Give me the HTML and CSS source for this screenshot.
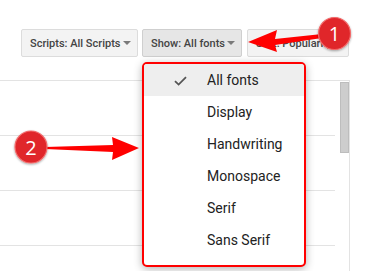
FILE: index.html
```html
<!DOCTYPE html>
<html lang="en">
<head>
    <meta charset="UTF-8">
    <meta name="viewport" content="width=device-width, initial-scale=1.0">
    <title>Font filters</title>
    <link rel="stylesheet" href="styles.css">
</head>
<body>
    <!-- ツールバー -->
    <div class="toolbar">
        <button class="filter scripts">Scripts: All Scripts <span class="caret"></span></button>
        <button class="filter show active">Show: All fonts <span class="caret"></span></button>
        <button class="filter sort">Sort: Popularity <span class="caret"></span></button>
    </div>

    <!-- 結果リスト -->
    <div class="results">
        <div class="rows">
            <div class="row"></div>
            <div class="row"></div>
            <div class="row"></div>
            <div class="row"></div>
        </div>
        <div class="track"><div class="thumb"></div></div>
    </div>

    <!-- ドロップダウンメニュー -->
    <div class="menu">
        <ul>
            <li class="selected">
                <svg class="check" width="13" height="10" viewBox="0 0 13 10"><path d="M1 5.2 L4.6 8.6 L12 1.2" fill="none" stroke="#555" stroke-width="1.8"/></svg>
                All fonts
            </li>
            <li>Display</li>
            <li>Handwriting</li>
            <li>Monospace</li>
            <li>Serif</li>
            <li>Sans Serif</li>
        </ul>
    </div>

    <!-- 注釈 -->
    <svg class="notes" width="369" height="271" viewBox="0 0 369 271">
        <defs>
            <filter id="soft" x="-30%" y="-30%" width="160%" height="160%">
                <feDropShadow dx="0" dy="1" stdDeviation="1.2" flood-color="#000" flood-opacity="0.35"/>
            </filter>
        </defs>
        <polygon points="248,42 277,30 275,39 322,34 322,38 275,45 277,52" fill="#ff0000"/>
        <polygon points="139,148 112,137 113,145 45,147 45,149 113,152 112,160" fill="#ff0000"/>
        <g filter="url(#soft)">
            <circle cx="334.5" cy="33.5" r="16" fill="#e0262b" stroke="#f26a6a" stroke-width="1.2"/>
            <circle cx="31" cy="147" r="16" fill="#e0262b" stroke="#f26a6a" stroke-width="1.2"/>
        </g>
        <text x="334.5" y="41" class="num">1</text>
        <text x="31" y="155" class="num">2</text>
    </svg>
</body>
</html>
```
FILE: styles.css
```css
body {
    margin: 0;
    width: 369px;
    height: 271px;
    overflow: hidden;
    background: #fff;
    font-family: Roboto, 'Liberation Sans', sans-serif;
    position: relative;
}

.toolbar {
    display: flex;
    justify-content: flex-end;
    gap: 4px;
    padding: 29px 20px 0 0;
}

.filter {
    flex-shrink: 0;
    white-space: nowrap;
    height: 28px;
    padding: 0 6px 0 8px;
    font-family: inherit;
    font-size: 11px;
    font-weight: 500;
    color: #444;
    background: #f3f3f3;
    border: 1px solid #dcdcdc;
    border-radius: 2px;
    display: flex;
    align-items: center;
    justify-content: space-between;
}

.scripts { width: 117px; }
.show { width: 100px; }
.sort { width: 102px; margin-left: 1px; }

.filter.active {
    background: #e6e6e6;
    border-color: #cfcfcf;
}

.caret {
    width: 0;
    height: 0;
    border-left: 4px solid transparent;
    border-right: 4px solid transparent;
    border-top: 4px solid #7a7a7a;
}

.results {
    display: flex;
    width: 349px;
    height: 190px;
    margin-top: 23px;
    border-top: 1px solid #e3e3e3;
    border-right: 1px solid #e3e3e3;
    overflow: hidden;
}

.rows {
    flex: 1;
    margin-right: 5px;
}

.row {
    height: 54px;
    border-bottom: 1px solid #e3e3e3;
}

.track {
    width: 9px;
    padding-top: 1px;
}

.thumb {
    height: 71px;
    background: #cdcdcd;
    border: 1px solid #bdbdbd;
    box-sizing: border-box;
}

/* ドロップダウン */
.menu {
    position: absolute;
    left: 142px;
    top: 62px;
    width: 160px;
    height: 201px;
    background: #fff;
    border: 2px solid #ff0000;
    border-radius: 5px;
    box-shadow: 0 2px 8px rgba(0, 0, 0, 0.3);
    overflow: hidden;
}

.menu ul {
    list-style: none;
    margin: 0;
    padding: 0;
}

.menu li {
    height: 32px;
    line-height: 32px;
    padding-left: 63px;
    font-size: 14px;
    color: #222;
    position: relative;
}

.menu li.selected {
    background: #eeeeee;
}

.check {
    position: absolute;
    left: 30px;
    top: 12px;
}

.notes {
    position: absolute;
    left: 0;
    top: 0;
    pointer-events: none;
}

.num {
    fill: #fff;
    font-family: 'Open Sans', sans-serif;
    font-size: 20px;
    text-anchor: middle;
}
```
